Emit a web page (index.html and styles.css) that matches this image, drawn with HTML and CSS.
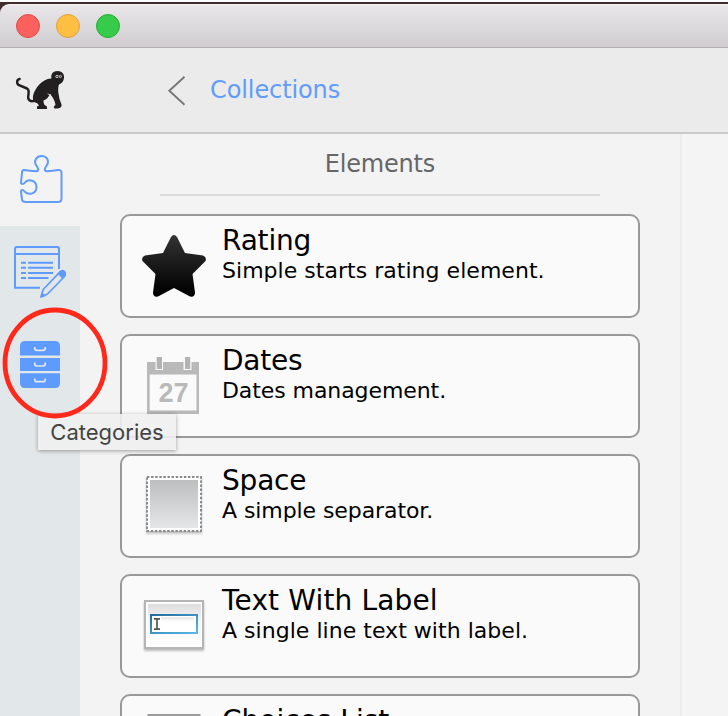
FILE: index.html
```html
<!DOCTYPE html>
<html lang="en">
<head>
<meta charset="utf-8">
<title>Collections</title>
<link rel="stylesheet" href="styles.css">
</head>
<body>
<div class="window">
  <div class="titlebar"><span class="dot red"></span><span class="dot yellow"></span><span class="dot green"></span></div>
  <header class="header">
    <svg class="logo" width="52" height="42" viewBox="14 69 52 42">
      <path d="M19.600 79C16.500 79.500 16.500 83.500 18.500 85L27 88.500C30.500 90.500 27.500 95 28.300 98.500Q30 102.500 35 100.500" fill="none" stroke="#231f20" stroke-width="2.500" stroke-linecap="round"/>
      <path d="M51.500 78.500C50.500 74 53 71 57.500 71C62 71 64.500 74 64 78C63.700 81.500 61.500 83.500 59 84.500C58 87 58 90.500 58.500 93.500L59.500 99L61.500 104.500C62 107.500 59.500 109 54.500 108.500C53 107.500 54 106 55.500 105C55 101 53 97 50 94C48.500 97.500 46.500 99.500 43.500 100.500C43.500 103.500 44 105.500 47 106.500V109H37V106.500L39 105.500L37 103C33.500 102.500 32 99.500 33.500 94C36 87.500 41 81.500 46.500 79.500C48.500 78.700 50 78.600 51.500 78.500Z" fill="#231f20"/>
      <path d="M48 93.500q1 2 2.500 1" fill="none" stroke="#ebebeb" stroke-width="1"/>
      <circle cx="57" cy="76.500" r="1.200" fill="none" stroke="#ddd" stroke-width=".9"/><circle cx="60.400" cy="76.500" r="1.100" fill="none" stroke="#ddd" stroke-width=".9"/>
    </svg>
    <svg class="back" width="20" height="34" viewBox="0 0 20 34"><path d="M17.500 1.700 2.300 15.800 17.500 29.800" fill="none" stroke="#777" stroke-width="1.900"/></svg>
    <a class="crumb">Collections</a>
  </header>
  <div class="body">
    <nav class="side">
      <div class="tab active">
        <svg width="80" height="92" viewBox="0 134 80 92"><path d="M24 170Q30 171 36 171.300C39.500 171 38.300 168.500 37 166.500C32.500 160.500 37 156 41.500 156C46.500 156 50.500 160.500 46 166.500C44.700 168.500 43.800 171 47 171.300Q53 171 58.500 170Q61.500 169.700 61.500 173V198.500Q61.500 202 58 202H25.500Q22.500 202 22 199.500L21 192C20.800 189.500 23 189.500 24.500 191.500C29 196 36.500 193.500 36.500 187C36.500 180.500 28.500 178.500 25 182.500C23.500 184.500 20.800 184.500 21 182.500L22 172.500Q22 170 24 170Z" fill="none" stroke="#629cf9" stroke-width="2" stroke-linejoin="round"/></svg>
      </div>
      <div class="tab">
        <svg width="80" height="92" viewBox="0 226 80 92" fill="none" stroke="#5f9aff" stroke-width="2"><path d="M40 287.700H15V249Q15 247 17 247H57Q59 247 59 249V269M15 254H59"/><path d="M21 262.700h5M28 262.700h25M21 267.700h5M28 267.700h25M21 273h5M28 273h25M21 278h5M28 278h20.500"/><path d="M41 297 43.200 289.500 59.500 272.300Q62 270 64.200 272Q66.300 274.400 64 277L47.500 294Z" stroke-width="1.700" stroke-linejoin="round"/><path d="M57.500 273.700 60.500 270.500Q63.500 268.700 65.500 271.500Q67 274.500 64.500 277L62.500 278.800Z M40.500 297.500 41.500 292 46 296Z" fill="#5f9aff" stroke="none"/></svg>
      </div>
      <div class="tab">
        <svg width="80" height="92" viewBox="0 318 80 92"><g fill="#5f9aff"><path d="M20 355.500V346Q20 341 25 341H55Q60 341 60 346V355.500ZM20 358H60V371H20ZM20 373.200H60V383Q60 388 55 388H25Q20 388 20 383Z"/></g><path d="M34.800 347V348.500Q34.800 350.300 37 350.300H43Q45.200 350.300 45.200 348.500V347M34.800 362.500V364Q34.800 366 37 366H43Q45.200 366 45.200 364V362.500M34.800 378.500V380Q34.800 381.700 37 381.700H43Q45.200 381.700 45.200 380V378.500" fill="none" stroke="#e2e7ea" stroke-width="1.700"/></svg>
      </div>
      <div class="tooltip">Categories</div>
      <svg class="ring" width="106" height="114" viewBox="0 0 106 114"><ellipse cx="53" cy="57" rx="50" ry="53" fill="none" stroke="#ff291b" stroke-width="4.800"/></svg>
    </nav>
    <main class="panel">
      <h1 class="heading">Elements</h1>
      <div class="cards">
        <article class="card">
          <svg class="pic" width="68" height="74" viewBox="140 226 68 74"><defs><linearGradient id="s" x2="0" y2="1"><stop stop-color="#333"/><stop offset=".95" stop-color="#000"/></linearGradient></defs><path d="M171 237Q174 233 177 237L185 253L203 255.500Q207 257 205.500 261L192.500 274L195 292.500Q195 297.500 190 296.500L174 288L158 296.500Q153 297.500 153 292.500L155.500 274L142.500 261Q141 257 145 255.500L163 253Z" fill="url(#s)"/></svg>
          <div><h2 class="t1">Rating</h2><p class="d1">Simple starts rating element.</p></div>
        </article>
        <article class="card">
          <svg class="pic" width="68" height="74" viewBox="140 346 68 74"><path d="M147 362H199V414H147Z" fill="#b9b9b9"/><path d="M149.700 374.500H196.500V410.500H149.700ZM155.500 357H163V370H155.500ZM183.500 357H191.500V370H183.500Z" fill="#fafafa"/><path d="M156.700 357H162V369H156.700ZM185 357H190.200V369H185Z" fill="#b3b3b3"/><text class="day" x="173.500" y="402" text-anchor="middle">27</text></svg>
          <div><h2 class="t2">Dates</h2><p class="d2">Dates management.</p></div>
        </article>
        <article class="card">
          <svg class="pic soft" width="68" height="74" viewBox="140 466 68 74"><defs><linearGradient id="g" x2="0" y2="1"><stop stop-color="#bdbec0"/><stop offset="1" stop-color="#e5e6e8"/></linearGradient></defs><rect x="147" y="477" width="54" height="54" fill="#fff" stroke="#888" stroke-width="2" stroke-dasharray="2.400 1.700"/><rect x="150" y="480" width="48" height="48" fill="url(#g)"/></svg>
          <div><h2 class="t3">Space</h2><p class="d3">A simple separator.</p></div>
        </article>
        <article class="card">
          <svg class="pic soft" width="68" height="74" viewBox="140 586 68 74"><defs><linearGradient id="f" x2="0" y2="1"><stop stop-color="#ddd"/><stop offset=".4" stop-color="#f5f5f5"/><stop offset="1" stop-color="#fff"/></linearGradient><linearGradient id="b" x2="1" y2="1"><stop stop-color="#226d9c"/><stop offset="1" stop-color="#58b9e9"/></linearGradient></defs><rect x="145" y="601" width="58" height="47" fill="#fff" stroke="#b4b5b5" stroke-width="2"/><rect x="148" y="604" width="53" height="42" fill="url(#f)"/><rect x="151" y="615" width="46" height="18" fill="#fff" stroke="url(#b)" stroke-width="2"/><path d="M161 617.500H194V622H161Z" fill="url(#f)"/><path d="M154 618.800H160M157 619V629M154 629.200H160" fill="none" stroke="#555" stroke-width="1.700"/></svg>
          <div><h2 class="t4">Text With Label</h2><p class="d4">A single line text with label.</p></div>
        </article>
        <article class="card">
          <svg class="pic" width="68" height="74" viewBox="140 706 68 74"><rect x="148.500" y="715" width="51" height="46" fill="#fff" stroke="#999" stroke-width="2"/></svg>
          <div><h2 class="t5">Choices List</h2></div>
        </article>
      </div>
    </main>
    <section class="content"></section>
  </div>
</div>
</body>
</html>
```
FILE: styles.css
```css
* { box-sizing: border-box; }
body { margin: 0; background: #402c2c; font-family: "DejaVu Sans", sans-serif; overflow: hidden; }
h1, h2, p { margin: 0; font-weight: 400; white-space: nowrap; }
svg { display: block; flex: none; }
.window { height: 716px; border-top: 2px solid #fff; padding-top: 2px; overflow: hidden; display: flex; flex-direction: column; }
.titlebar { flex: none; height: 44px; border-radius: 9px 0 0 0; border-bottom: 1px solid #b2aeb2; background: linear-gradient(#f5f4f5 0, #e8e6e9 2px, #d0ced1 42px); display: flex; gap: 16px; padding: 10px 16px; }
.dot { width: 24px; height: 24px; border-radius: 50%; border: 1px solid; }
.red { background: #fd615d; border-color: #df4b48; }
.yellow { background: #febf42; border-color: #dfa13a; }
.green { background: #36cb4b; border-color: #27ad35; }
.header { flex: none; height: 86px; background: #ebebeb; border-bottom: 2px solid #cacaca; display: flex; padding-left: 14px; }
.logo { margin-top: 21px; }
.back { margin: 27px 0 0 101px; }
.crumb { margin-left: 23px; font-size: 24px; line-height: 28px; padding-top: 28px; color: #629cfb; letter-spacing: -.1px; }
.body { flex: 1; min-height: 0; display: flex; background: #f3f3f3; }
.side { flex: none; width: 80px; background: #e2e7ea; position: relative; z-index: 1; }
.active { background: #f3f3f3; }
.ring { position: absolute; left: 2px; top: 172px; }
.tooltip { position: absolute; left: 38px; top: 280px; width: 138px; height: 36px; background: rgba(239, 239, 239, .9); box-shadow: 0 1px 4px rgba(0, 0, 0, .35); font: 22px/36px Inter, sans-serif; color: #444; text-align: center; letter-spacing: 0; }
.panel { flex: none; width: 602px; border-right: 2px solid #ececec; padding: 0 40px; }
.heading { height: 62px; margin: 0 40px; border-bottom: 2px solid #dcdcdc; text-align: center; font-size: 24px; line-height: 28px; padding-top: 16px; color: #666; letter-spacing: -.2px; }
.cards { padding-top: 18px; display: flex; flex-direction: column; gap: 16px; }
.card { flex: none; height: 104px; border: 2px solid #999; border-radius: 10px; background: #fafafa; display: flex; gap: 14px; padding: 9px 0 0 18px; }
.pic { margin-top: 1px; }
.soft { filter: drop-shadow(0 2px 1px rgba(0, 0, 0, .25)); }
.card h2 { font-size: 28px; line-height: 32px; color: #000; }
.card p { font-size: 22px; line-height: 28px; color: #000; }
.card .t1, .card .t2, .card .t3 { letter-spacing: -.2px; }
.card .t4 { letter-spacing: .15px; }
.card .d2, .card .d3 { letter-spacing: -.08px; }
.card .d1, .card .d4 { letter-spacing: .03px; }
.day { font: bold 27px "Liberation Sans", sans-serif; fill: #b9b9b9; }
.content { flex: 1; background: #f4f4f4; }
```
